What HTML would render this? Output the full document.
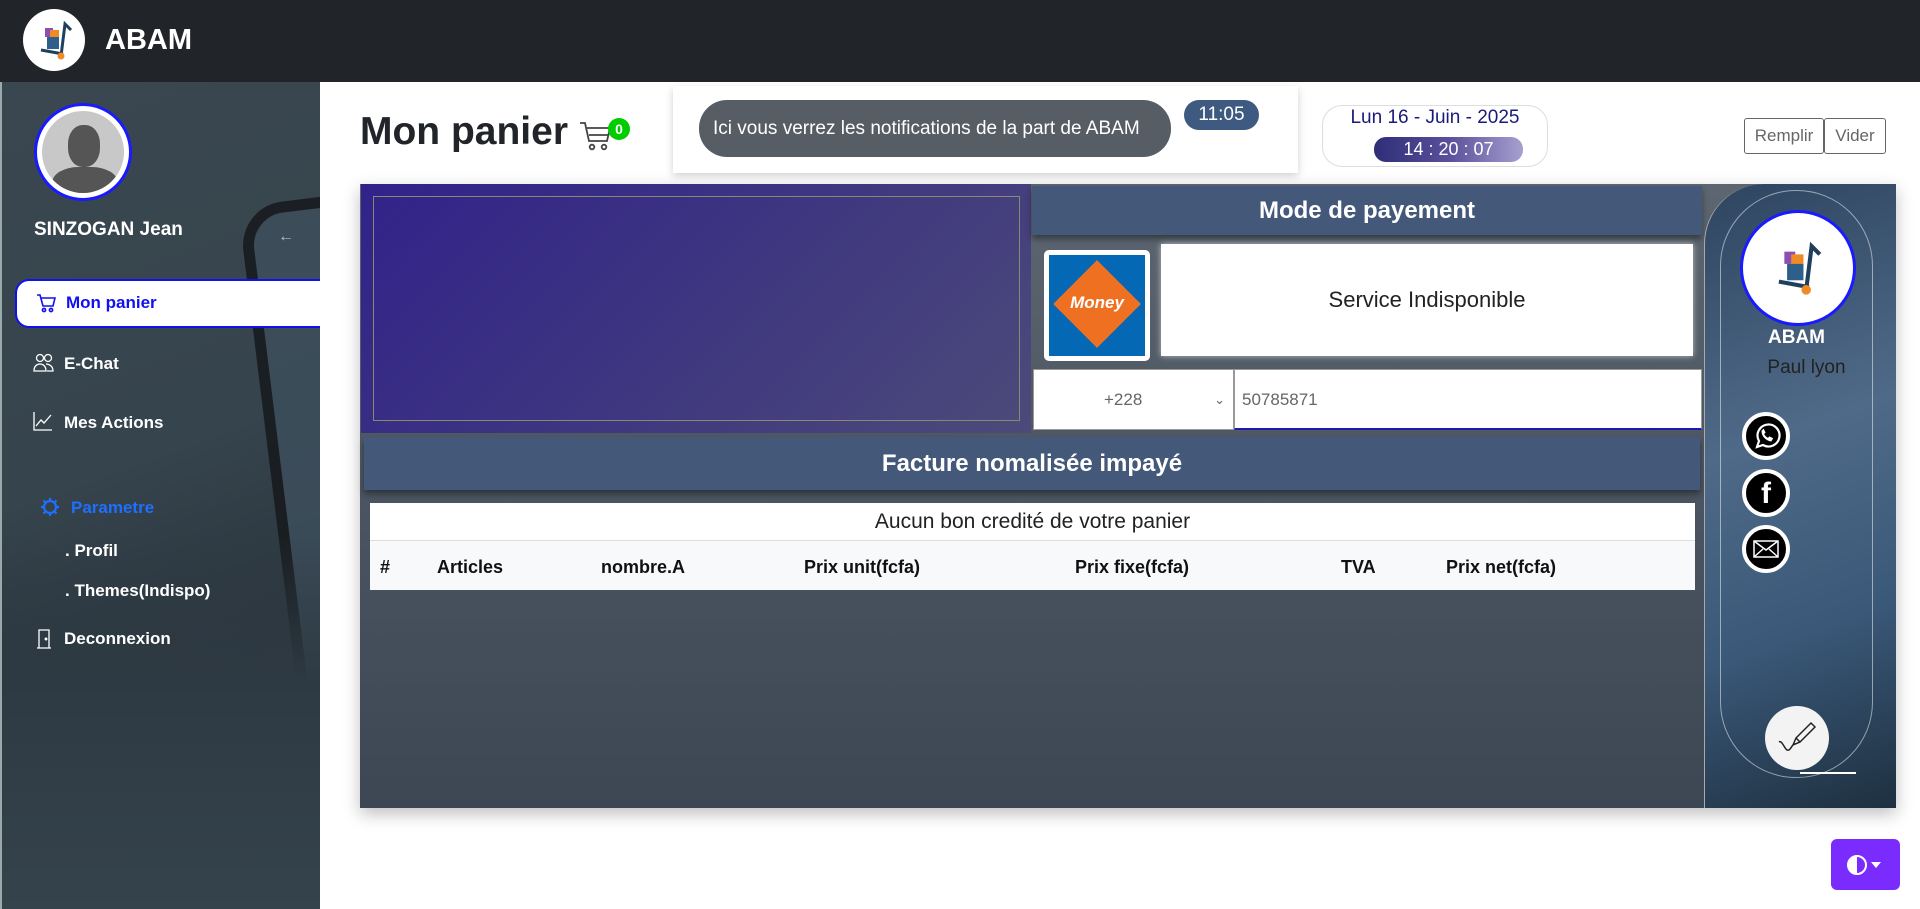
<!DOCTYPE html>
<html><head><meta charset="utf-8"><style>
*{box-sizing:border-box;margin:0;padding:0}
html{width:1920px;height:909px;overflow:hidden}
body{width:1920px;height:909px;overflow:hidden;background:#fff;font-family:"Liberation Sans",sans-serif;position:relative}
.abs{position:absolute}
.hdr{left:0;top:0;width:1920px;height:82px;background:#212529}
.side{left:0;top:82px;width:320px;height:827px;background:linear-gradient(160deg,#3a4750 0%,#36444d 45%,#2a343c 70%,#35434c 100%);border-left:2px solid #9aa;overflow:hidden}
.nav{color:#fff;font-size:17px;font-weight:bold;}
.card{left:360px;top:184px;width:1536px;height:624px;background:linear-gradient(180deg,#5d6670 0%,#4b5561 50%,#3d4754 100%);box-shadow:0 6px 16px rgba(0,0,0,.25)}
.hbar{background:#44587a;color:#fff;font-weight:bold;font-size:24px;text-align:center;box-shadow:0 4px 6px rgba(0,0,0,.4)}
.th{top:557px;font-size:18px;font-weight:bold;color:#111}
.soc{width:48px;height:48px;border-radius:50%;background:#000;border:4px solid #fff;left:1742px}
</style></head><body>
<div class="abs hdr"></div>
<div class="abs" style="left:23px;top:9px;width:62px;height:62px;border-radius:50%;background:#fff"></div>
<svg class="abs" style="left:33px;top:18px" width="44" height="44" viewBox="0 0 44 44"><rect x="12" y="10" width="8" height="9" fill="#8a4fb0"/><rect x="17" y="12" width="9" height="9" fill="#f08a24"/><rect x="14" y="19" width="12" height="12" fill="#2d5f8a"/><path d="M8 32 L30 36 M28 38 L32 6 L38 12" stroke="#1f3f5f" stroke-width="3" fill="none"/><circle cx="28" cy="38" r="3.5" fill="#f08a24"/></svg>
<div class="abs" style="left:105px;top:24px;color:#fff;font-size:29px;font-weight:bold">ABAM</div>

<div class="abs side">
  <div class="abs" style="left:236px;top:125px;width:240px;height:640px;border:11px solid #16191c;border-radius:44px;background:#3d4e5c;transform:rotate(-7deg);transform-origin:0 0;opacity:.85"></div>
  <div class="abs" style="left:0;top:450px;width:320px;height:377px;background:linear-gradient(180deg,rgba(42,52,60,0),#2e3a43 40%,#35434c)"></div>
</div>
<div class="abs" style="left:278px;top:228px;color:#bbb;font-size:16px">←</div>
<div class="abs" style="left:34px;top:103px;width:98px;height:98px;border-radius:50%;border:3px solid #1a1aff;background:#fff;padding:5px"><div style="width:100%;height:100%;border-radius:50%;background:#c8c8c8;overflow:hidden;position:relative"><div style="position:absolute;left:26px;top:14px;width:32px;height:42px;border-radius:45%;background:#555"></div><div style="position:absolute;left:10px;top:56px;width:66px;height:40px;border-radius:40% 40% 0 0;background:#555"></div></div></div>
<div class="abs nav" style="left:34px;top:219px;font-size:19px">SINZOGAN Jean</div>
<div class="abs" style="left:15px;top:279px;width:305px;height:49px;background:#fff;border:2px solid #1010f0;border-right:none;border-radius:14px 0 0 14px"></div>
<svg class="abs" style="left:36px;top:293px" width="20" height="20" viewBox="0 0 20 20" fill="none" stroke="#1010f0" stroke-width="1.6"><path d="M1 2h3l3 11h10l2-8H5"/><circle cx="8" cy="17" r="1.6"/><circle cx="15" cy="17" r="1.6"/></svg>
<div class="abs" style="left:66px;top:293px;color:#1010f0;font-size:17px;font-weight:bold">Mon panier</div>
<svg class="abs" style="left:33px;top:353px" width="22" height="20" viewBox="0 0 22 20" fill="none" stroke="#fff" stroke-width="1.3"><circle cx="7" cy="5" r="3.5"/><circle cx="15" cy="5" r="3.5"/><path d="M1 18c0-5 3-7 6-7s6 2 6 7zM13 11c3 0 7 2 7 7h-6"/></svg>
<div class="abs nav" style="left:64px;top:354px">E-Chat</div>
<svg class="abs" style="left:33px;top:411px" width="20" height="20" viewBox="0 0 20 20" fill="none" stroke="#fff" stroke-width="1.3"><path d="M1 1v18h18M3 15l5-6 3 3 7-8"/></svg>
<div class="abs nav" style="left:64px;top:413px">Mes Actions</div>
<svg class="abs" style="left:40px;top:497px" width="20" height="20" viewBox="0 0 20 20" fill="none" stroke="#1e6fff" stroke-width="2.2"><circle cx="10" cy="10" r="6"/><path d="M10 1v3M10 16v3M1 10h3M16 10h3M3.5 3.5l2 2M14.5 14.5l2 2M3.5 16.5l2-2M14.5 5.5l2-2"/></svg>
<div class="abs nav" style="left:71px;top:498px;color:#1e6fff">Parametre</div>
<div class="abs nav" style="left:65px;top:541px">. Profil</div>
<div class="abs nav" style="left:65px;top:581px">. Themes(Indispo)</div>
<svg class="abs" style="left:36px;top:628px" width="16" height="22" viewBox="0 0 16 22" fill="none" stroke="#fff" stroke-width="1.3"><path d="M3 20V2h10v18M1 20h14"/><circle cx="10" cy="11" r=".8" fill="#fff"/></svg>
<div class="abs nav" style="left:64px;top:629px">Deconnexion</div>

<div class="abs" style="left:360px;top:110px;font-size:39px;font-weight:bold;color:#212529">Mon panier</div>
<svg class="abs" style="left:579px;top:121px" width="34" height="30" viewBox="0 0 34 30" fill="none" stroke="#444" stroke-width="1.8"><path d="M1 2h5l4 18h18l3-13H8M10 14h20"/><circle cx="13" cy="26" r="2.3"/><circle cx="25" cy="26" r="2.3"/></svg>
<div class="abs" style="left:608px;top:118px;width:22px;height:22px;border-radius:50%;background:#0c0;color:#fff;font-size:14px;font-weight:bold;text-align:center;line-height:22px">0</div>

<div class="abs" style="left:673px;top:86px;width:625px;height:87px;background:#fff;box-shadow:0 3px 8px rgba(0,0,0,.18)"></div>
<div class="abs" style="left:699px;top:100px;width:472px;height:57px;border-radius:28px;background:#575d65;color:#fff;font-size:19px;line-height:57px;padding-left:14px">Ici vous verrez les notifications de la part de ABAM</div>
<div class="abs" style="left:1184px;top:100px;width:75px;height:30px;border-radius:15px;background:#3e5a80;color:#fff;font-size:19px;text-align:center;line-height:30px">11:05</div>

<div class="abs" style="left:1322px;top:105px;width:226px;height:62px;border:1px solid #ddd;border-radius:20px;background:#fff"></div>
<div class="abs" style="left:1322px;top:107px;width:226px;text-align:center;color:#1a1a7a;font-size:19px">Lun 16 - Juin - 2025</div>
<div class="abs" style="left:1374px;top:137px;width:149px;height:25px;border-radius:12px;background:linear-gradient(90deg,#2e2e78,#5a4f9a,#a6a0d0);color:#fff;font-size:18px;text-align:center;line-height:25px">14 : 20 : 07</div>
<div class="abs" style="left:1744px;top:118px;width:80px;height:36px;border:1px solid #666;border-radius:3px;color:#666;font-size:17px;text-align:center;line-height:34px">Remplir</div>
<div class="abs" style="left:1824px;top:118px;width:62px;height:36px;border:1px solid #666;border-radius:3px;color:#666;font-size:17px;text-align:center;line-height:34px">Vider</div>

<div class="abs card"></div>
<div class="abs" style="left:361px;top:184px;width:670px;height:249px;background:linear-gradient(135deg,#31228a,#3e3680 50%,#4c4a7a)"></div>
<div class="abs" style="left:373px;top:196px;width:647px;height:225px;border:1px solid #8a8870"></div>
<div class="abs hbar" style="left:1032px;top:186px;width:670px;height:49px;line-height:49px">Mode de payement</div>
<div class="abs" style="left:1044px;top:250px;width:106px;height:111px;background:#fff;border-radius:5px;padding:5px"><div style="width:100%;height:100%;background:#0468b4;position:relative;overflow:hidden"><div style="position:absolute;left:17px;top:18px;width:62px;height:62px;background:#f07022;transform:rotate(45deg)"></div><div style="position:absolute;left:0;width:100%;top:38px;text-align:center;color:#fff;font-weight:bold;font-size:17px;font-style:italic">Money</div></div></div>
<div class="abs" style="left:1161px;top:244px;width:532px;height:112px;background:#fff;box-shadow:0 0 6px rgba(255,255,255,.6);text-align:center;line-height:112px;font-size:22px;color:#222">Service Indisponible</div>
<div class="abs" style="left:1033px;top:369px;width:201px;height:61px;background:#fff;border:1px solid #999;color:#666;font-size:17px;line-height:59px;padding-left:70px">+228 <span style="position:absolute;right:8px;font-size:13px">⌄</span></div>
<div class="abs" style="left:1234px;top:369px;width:468px;height:61px;background:#fff;border:1px solid #999;color:#666;font-size:17px;line-height:59px;padding-left:7px;border-bottom:2px solid #1a1ab0">50785871</div>
<div class="abs hbar" style="left:364px;top:437px;width:1336px;height:53px;line-height:53px">Facture nomalisée impayé</div>
<div class="abs" style="left:370px;top:503px;width:1325px;height:37px;background:#fff;text-align:center;font-size:21px;line-height:37px;color:#222">Aucun bon credité de votre panier</div>
<div class="abs" style="left:370px;top:540px;width:1325px;height:50px;background:#f8f9fa;border-top:1px solid #ddd"></div>
<div class="abs th" style="left:380px">#</div>
<div class="abs th" style="left:437px">Articles</div>
<div class="abs th" style="left:601px">nombre.A</div>
<div class="abs th" style="left:804px">Prix unit(fcfa)</div>
<div class="abs th" style="left:1075px">Prix fixe(fcfa)</div>
<div class="abs th" style="left:1341px">TVA</div>
<div class="abs th" style="left:1446px">Prix net(fcfa)</div>

<div class="abs" style="left:1704px;top:184px;width:192px;height:624px;background:linear-gradient(160deg,#2e4560,#4f6a88 40%,#3a5878 70%,#1e3040);border-left:1px solid #aaa;border-radius:60px 0 0 0"></div>
<div class="abs" style="left:1720px;top:190px;width:153px;height:588px;border:1px solid rgba(255,255,255,.5);border-radius:76px"></div>
<div class="abs" style="left:1740px;top:210px;width:116px;height:116px;border-radius:50%;background:#fff;border:3px solid #1a1aff"></div>
<svg class="abs" style="left:1768px;top:238px" width="60" height="60" viewBox="0 0 44 44"><rect x="12" y="10" width="8" height="9" fill="#8a4fb0"/><rect x="17" y="12" width="9" height="9" fill="#f08a24"/><rect x="14" y="19" width="12" height="12" fill="#2d5f8a"/><path d="M8 32 L30 36 M28 38 L32 6 L38 12" stroke="#1f3f5f" stroke-width="3" fill="none"/><circle cx="28" cy="38" r="3.5" fill="#f08a24"/></svg>
<div class="abs" style="left:1720px;top:327px;width:153px;text-align:center;color:#fff;font-weight:bold;font-size:19px">ABAM</div>
<div class="abs" style="left:1730px;top:357px;width:153px;text-align:center;color:#222;font-size:19px">Paul lyon</div>
<div class="abs soc" style="top:412px"><svg width="40" height="40" viewBox="0 0 40 40" fill="none" stroke="#fff" stroke-width="2.2"><path d="M11 31l2-6a11 11 0 1 1 4 4z"/><path d="M16 15c0 5 4 9 9 10l1.5-2.5-3-1.5-1.5 1.5c-2-1-3.5-2.5-4.5-4.5l1.5-1.5-1.5-3z" fill="#fff" stroke-width="1"/></svg></div>
<div class="abs soc" style="top:469px;color:#fff;text-align:center;line-height:42px;font-size:30px;font-weight:bold">f</div>
<div class="abs soc" style="top:525px"><svg width="40" height="40" viewBox="0 0 40 40" fill="none" stroke="#fff" stroke-width="1.5"><rect x="8" y="12" width="24" height="16"/><path d="M8 12l12 9 12-9M8 28l9-8M32 28l-9-8"/></svg></div>
<div class="abs" style="left:1765px;top:706px;width:64px;height:64px;border-radius:50%;background:#f3f3f3"></div>
<svg class="abs" style="left:1777px;top:718px" width="40" height="40" viewBox="0 0 40 40" fill="none" stroke="#222" stroke-width="1.5"><path d="M2 24c3-2 5 6 8 8 3 1 4-3 6-5"/><path d="M16 27l3-7 15-15 4 4-15 15z M19 20l4 4"/></svg>
<div class="abs" style="left:1800px;top:772px;width:56px;height:2px;background:#fff"></div>

<div class="abs" style="left:1831px;top:839px;width:69px;height:51px;border-radius:6px;background:#7a2cff"></div>
<svg class="abs" style="left:1846px;top:854px" width="40" height="22" viewBox="0 0 40 22"><circle cx="11" cy="11" r="9" fill="none" stroke="#fff" stroke-width="2"/><path d="M11 2a9 9 0 0 0 0 18z" fill="#fff"/><path d="M25 8h10l-5 6z" fill="#fff"/></svg>
</body></html>
